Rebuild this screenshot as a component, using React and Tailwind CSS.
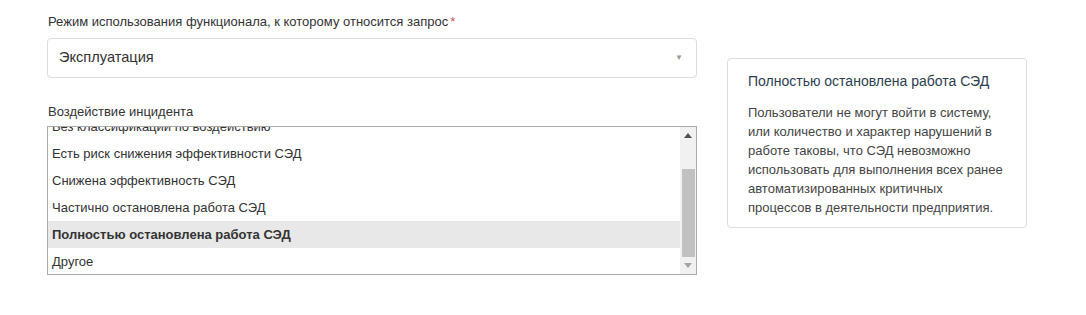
export default function App() {
  const items = [
    "Без классификации по воздействию",
    "Есть риск снижения эффективности СЭД",
    "Снижена эффективность СЭД",
    "Частично остановлена работа СЭД",
    "Полностью остановлена работа СЭД",
    "Другое",
  ];
  return (
    <div className="w-[1086px] h-[315px] bg-white flex text-[#333] [font-family:'Liberation_Sans',Arial,sans-serif]">
      <div className="ml-[47px] mt-[14px] w-[650px] flex flex-col">
        <div className="text-[13px] leading-[16px] pl-px">
          Режим использования функционала, к которому относится запрос
          <span className="text-[#d9534f] ml-[2px]">*</span>
        </div>
        <div className="mt-[8px] h-[40px] border border-[#dcdcdc] rounded-[4px] flex items-center justify-between pl-[11px] pr-[13px]">
          <span className="text-[14.6px]">Эксплуатация</span>
          <span className="text-[8px] text-[#999]">▼</span>
        </div>
        <div className="mt-[26px] text-[13px] leading-[16px] pl-px">Воздействие инцидента</div>
        <div className="mt-[6px] h-[149px] border border-[#aaa] flex overflow-hidden">
          <div className="flex-1 overflow-hidden">
            <div className="mt-[-14px]">
              {items.map((t, i) => (
                <div
                  key={i}
                  className={
                    "h-[27px] flex items-center pl-[4px] text-[13px] " +
                    (i === 4 ? "bg-[#e8e8e8] font-bold" : "")
                  }
                >
                  {t}
                </div>
              ))}
            </div>
          </div>
          <div className="w-[16px] bg-[#f1f1f1] flex flex-col items-center">
            <div className="h-[17px] flex items-center justify-center">
              <svg width="8" height="5" viewBox="0 0 8 5"><path d="M0 5 L4 0 L8 5 Z" fill="#505050" /></svg>
            </div>
            <div className="mt-[25px] w-[13px] h-[88px] bg-[#c1c1c1]" />
            <div className="flex-1 flex items-center justify-center">
              <svg width="8" height="5" viewBox="0 0 8 5"><path d="M0 0 L4 5 L8 0 Z" fill="#a3a3a3" /></svg>
            </div>
          </div>
        </div>
      </div>
      <div className="ml-[30px] mt-[58px] w-[300px] h-[170px] border border-[#dddddd] rounded-[4px] pl-[20px] pr-[18px] pt-[12px]">
        <div className="text-[14px] leading-[20px] text-[#2c3e50]">Полностью остановлена работа СЭД</div>
        <div className="mt-[12px] text-[13px] leading-[19px] text-[#444]">
          Пользователи не могут войти в систему, или количество и характер нарушений в работе таковы, что СЭД невозможно использовать для выполнения всех ранее автоматизированных критичных процессов в деятельности предприятия.
        </div>
      </div>
    </div>
  );
}
